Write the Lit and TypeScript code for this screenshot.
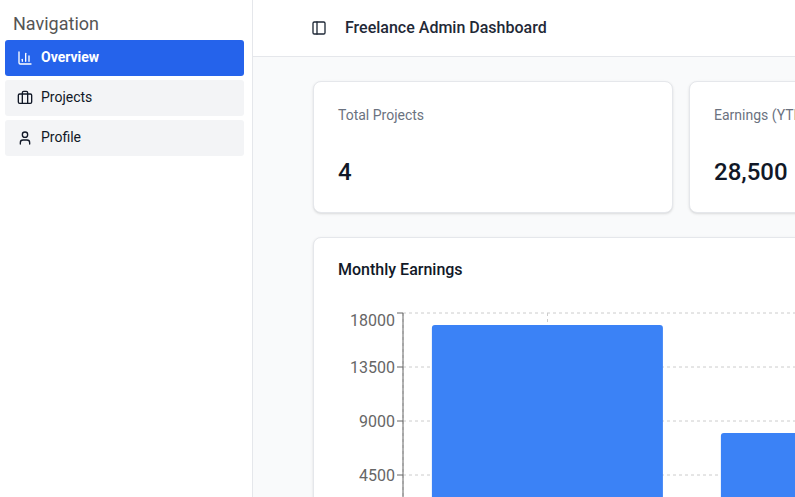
import { LitElement, html, svg, css } from "lit";
import { customElement } from "lit/decorators.js";

const icons = {
  chart: svg`<path d="M3 3v16a2 2 0 0 0 2 2h16"/><path d="M18 17V9"/><path d="M13 17V5"/><path d="M8 17v-3"/>`,
  briefcase: svg`<path d="M16 20V4a2 2 0 0 0-2-2h-4a2 2 0 0 0-2 2v16"/><rect width="20" height="14" x="2" y="6" rx="2"/>`,
  user: svg`<path d="M19 21v-2a4 4 0 0 0-4-4H9a4 4 0 0 0-4 4v2"/><circle cx="12" cy="7" r="4"/>`,
  panel: svg`<rect width="18" height="18" x="3" y="3" rx="2"/><path d="M9 3v18"/>`,
};

const icon = (name: keyof typeof icons) => html`<svg class="icon" viewBox="0 0 24 24" width="16" height="16" fill="none" stroke="currentColor" stroke-width="2" stroke-linecap="round" stroke-linejoin="round">${icons[name]}</svg>`;

@customElement("earnings-chart")
export class EarningsChart extends LitElement {
  static styles = css`
    :host { display: block; height: 256px; }
    svg { display: block; overflow: hidden; }
    .tick { font-size: 16px; fill: #666; text-anchor: end; }
    .grid { stroke: #ccc; stroke-dasharray: 3 3; }
    .axis { stroke: #666; }
    .bar { fill: #3b82f6; }
  `;

  render() {
    const left = 65, top = 5, height = 216, band = 289, max = 18000;
    const ticks = [18000, 13500, 9000, 4500, 0];
    const values = [17000, 8000];
    const y = (v: number) => top + height * (1 - v / max);
    return html`<svg width="932" height="256">
      ${ticks.map((t) => svg`<line class="grid" x1=${left} x2="932" y1=${y(t)} y2=${y(t)} />`)}
      <line class="grid" x1=${left} x2=${left} y1=${top} y2=${top + height} />
      ${values.map((_, i) => svg`<line class="grid" x1=${left + band * (i + 0.5)} x2=${left + band * (i + 0.5)} y1=${top} y2=${top + height} />`)}
      <line class="axis" x1=${left} x2=${left} y1=${top} y2=${top + height} />
      ${ticks.map((t) => svg`<line class="axis" x1=${left - 6} x2=${left} y1=${y(t)} y2=${y(t)} />
        <text class="tick" x=${left - 8} y=${Math.max(y(t), 12) + 5.68}>${t}</text>`)}
      ${values.map((v, i) => {
        const x = left + band * (i + 0.1);
        return svg`<path class="bar" d="M${x} ${y(v) + 3}a3 3 0 0 1 3-3h225a3 3 0 0 1 3 3V${top + height}h-231z" />`;
      })}
    </svg>`;
  }
}

@customElement("app-root")
export class AppRoot extends LitElement {
  static styles = css`
    * { box-sizing: border-box; }
    :host {
      display: flex; height: 497px; overflow: hidden; background: #f9fafb;
      font-family: Roboto, sans-serif; color: #111827;
    }
    .icon { display: block; flex: none; }
    .sidebar {
      flex: none; width: 253px; padding: 10px 8px 0 5px;
      background: #fff; border-right: 1px solid #e5e7eb;
    }
    .heading { margin: 0; padding-left: 8px; height: 30px; font-size: 18px; line-height: 28px; font-weight: 400; color: #555; }
    .menu { display: flex; flex-direction: column; gap: 4px; }
    .item {
      display: flex; align-items: center; gap: 8px; height: 36px; padding: 0 12px;
      border-radius: 3px; background: #f3f4f6; font-size: 14px; line-height: 20px;
    }
    .item span { margin-top: -2px; }
    .item.active { background: #2563eb; color: #fff; font-weight: 700; }
    .main { flex: 1; min-width: 0; overflow: hidden; }
    .header {
      display: flex; align-items: center; gap: 18px; height: 57px; padding-left: 58px;
      background: #fff; border-bottom: 1px solid #e5e7eb; color: #1f2937;
    }
    .header h1 { margin: 0; font-size: 16px; line-height: 24px; font-weight: 500; }
    .content { width: 1060px; padding: 24px 0 0 60px; }
    .stats { display: flex; gap: 16px; margin-bottom: 24px; }
    .card {
      background: #fff; border: 1px solid #e5e7eb; border-radius: 8px;
      box-shadow: 0 1px 3px rgba(0, 0, 0, 0.1), 0 1px 2px -1px rgba(0, 0, 0, 0.1);
      padding: 24px;
    }
    .stat { flex: none; width: 360px; height: 132px; padding-top: 23px; }
    .label { font-size: 14px; line-height: 20px; color: #6b7280; }
    .value { margin-top: 31px; font-size: 24px; line-height: 32px; font-weight: 500; }
    .title { margin: 0 0 30px; font-size: 16px; line-height: 16px; font-weight: 500; }
  `;

  render() {
    return html`
      <aside class="sidebar">
        <h2 class="heading">Navigation</h2>
        <nav class="menu">
          <div class="item active">${icon("chart")}<span>Overview</span></div>
          <div class="item">${icon("briefcase")}<span>Projects</span></div>
          <div class="item">${icon("user")}<span>Profile</span></div>
        </nav>
      </aside>
      <main class="main">
        <header class="header">${icon("panel")}<h1>Freelance Admin Dashboard</h1></header>
        <div class="content">
          <section class="stats">
            <div class="card stat"><div class="label">Total Projects</div><div class="value">4</div></div>
            <div class="card stat"><div class="label">Earnings (YTD)</div><div class="value">28,500</div></div>
          </section>
          <section class="card">
            <h2 class="title">Monthly Earnings</h2>
            <earnings-chart></earnings-chart>
          </section>
        </div>
      </main>
    `;
  }
}
